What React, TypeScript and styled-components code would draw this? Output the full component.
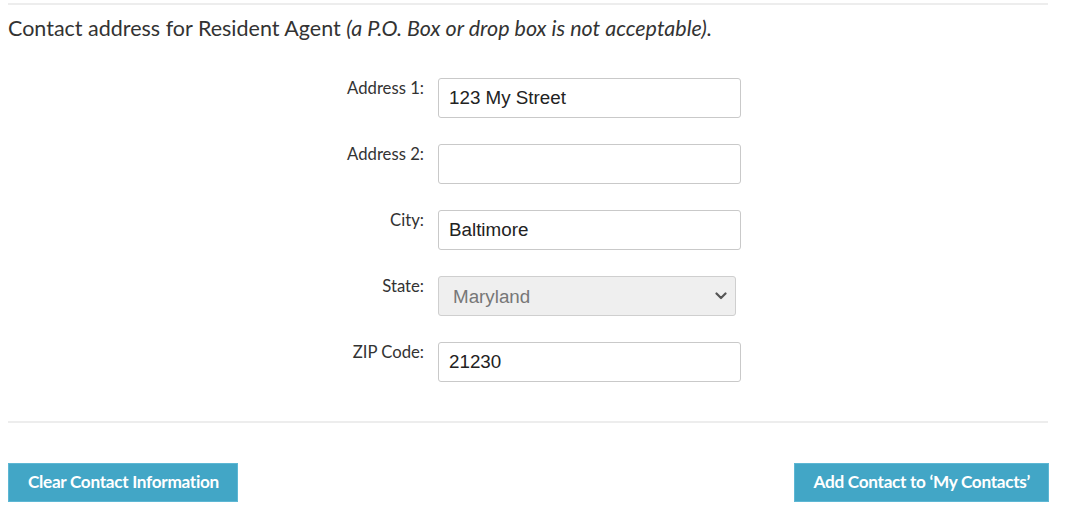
import React from "react";
import styled, { createGlobalStyle } from "styled-components";

const Global = createGlobalStyle`
  html, body { margin: 0; padding: 0; background: #fff; }
  body { font-family: Lato, "Open Sans", sans-serif; color: #333; }
`;

const Page = styled.div`
  width: 1040px;
  padding: 3px 0 0 8px;
`;

const Rule = styled.div<{ $mt: number }>`
  height: 2px;
  background: #ededed;
  margin-top: ${(p) => p.$mt}px;
`;

const Heading = styled.p`
  margin: 10px 0 0;
  font-size: 21.5px;
  line-height: 26px;
  color: #333;
  em { font-style: italic; }
`;

const Form = styled.div`
  display: grid;
  grid-template-columns: 416px 303px;
  column-gap: 14px;
  row-gap: 26px;
  margin-top: 37px;
`;

const Label = styled.label`
  font-size: 16.7px;
  line-height: 20px;
  text-align: right;
  color: #333;
`;

const Input = styled.input`
  box-sizing: border-box;
  width: 303px;
  height: 40px;
  border: 1px solid #c9c9c9;
  border-radius: 3px;
  padding: 0 10px;
  font-family: "Liberation Sans", Arial, sans-serif;
  font-size: 18.8px;
  color: #222;
  background: #fff;
  outline: none;
`;

const SelectWrap = styled.div`
  position: relative;
  width: 298px;
  height: 40px;
`;

const Select = styled.select`
  box-sizing: border-box;
  width: 298px;
  height: 40px;
  appearance: none;
  border: 1px solid #cfcfcf;
  border-radius: 3px;
  padding: 0 14px;
  font-family: "Liberation Sans", Arial, sans-serif;
  font-size: 18.8px;
  color: #777;
  background: #efefef;
  outline: none;
`;

const Chevron = styled.svg`
  position: absolute;
  right: 9px;
  top: 16px;
  pointer-events: none;
`;

const Buttons = styled.div`
  display: flex;
  justify-content: space-between;
  margin: 40px -1px 0 0;
`;

const Button = styled.button`
  box-sizing: border-box;
  height: 39px;
  padding: 0 18px 2px 19px;
  border: 1px solid #5db7d4;
  background: #42a6c6;
  color: #fff;
  font-family: Lato, "Open Sans", sans-serif;
  font-weight: 700;
  font-size: 17.2px;
  letter-spacing: -0.3px;
  cursor: pointer;
`;

export default function App() {
  return (
    <>
      <Global />
      <Page>
        <Rule $mt={0} />
        <Heading>
          Contact address for Resident Agent <em>(a P.O. Box or drop box is not acceptable).</em>
        </Heading>
        <Form>
          <Label>Address 1:</Label>
          <Input defaultValue="123 My Street" />
          <Label>Address 2:</Label>
          <Input defaultValue="" />
          <Label>City:</Label>
          <Input defaultValue="Baltimore" />
          <Label>State:</Label>
          <SelectWrap>
            <Select defaultValue="MD">
              <option value="MD">Maryland</option>
            </Select>
            <Chevron width="12" height="8" viewBox="0 0 12 8">
              <path d="M1.5 1.5 L6 6 L10.5 1.5" fill="none" stroke="#555" strokeWidth="2.2" strokeLinecap="round" strokeLinejoin="round" />
            </Chevron>
          </SelectWrap>
          <Label>ZIP Code:</Label>
          <Input defaultValue="21230" />
        </Form>
        <Rule $mt={39} />
        <Buttons>
          <Button>Clear Contact Information</Button>
          <Button>Add Contact to ‘My Contacts’</Button>
        </Buttons>
      </Page>
    </>
  );
}
